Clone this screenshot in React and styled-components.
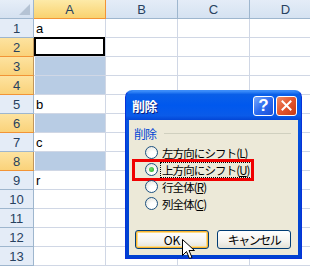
import React from "react";
import styled, { createGlobalStyle, css } from "styled-components";

const GlobalStyle = createGlobalStyle`
  html, body {
    margin: 0;
    padding: 0;
    background: #ffffff;
    overflow: hidden;
  }
  body {
    font-family: "Noto Sans CJK JP", "Liberation Sans", sans-serif;
  }
`;

const Screen = styled.div`
  position: relative;
  width: 310px;
  height: 266px;
  overflow: hidden;
`;

const Sheet = styled.div`
  display: grid;
  grid-template-columns: 34px repeat(4, 72px);
  grid-auto-rows: 19px;
  width: 322px;
`;

const Corner = styled.div`
  position: relative;
  box-sizing: border-box;
  background: linear-gradient(#e6eef8, #d5e1f0);
  border-right: 1px solid #9eb6ce;
  border-bottom: 1px solid #9eb6ce;
  &::after {
    content: "";
    position: absolute;
    right: 3px;
    bottom: 3px;
    border-left: 11px solid transparent;
    border-bottom: 11px solid #b5c3d4;
  }
`;

const ColHead = styled.div`
  box-sizing: border-box;
  display: flex;
  align-items: center;
  justify-content: center;
  font-family: "Liberation Sans", "Noto Sans", sans-serif;
  font-size: 13px;
  color: #27415f;
  background: linear-gradient(#e4ecf7, #d5e2f1);
  border-right: 1px solid #9eb6ce;
  border-bottom: 1px solid #9eb6ce;
  ${(p) =>
    p.$on &&
    css`
      background: linear-gradient(#fdeaa8, #f9d26f);
      border-right-color: #f29436;
      border-bottom-color: #f29436;
    `}
`;

const RowHead = styled.div`
  box-sizing: border-box;
  display: flex;
  align-items: center;
  justify-content: center;
  font-family: "Liberation Sans", "Noto Sans", sans-serif;
  font-size: 13px;
  color: #27415f;
  background: #e4ecf7;
  border-right: 1px solid #9eb6ce;
  border-bottom: 1px solid #9eb6ce;
  ${(p) =>
    p.$on &&
    css`
      background: linear-gradient(#fde3a0, #fad27a);
      border-right-color: #c0965c;
      border-bottom-color: #f29436;
    `}
`;

const Cell = styled.div`
  position: relative;
  box-sizing: border-box;
  display: flex;
  align-items: center;
  padding-left: 2px;
  font-family: "Liberation Sans", "Noto Sans", sans-serif;
  font-size: 13px;
  color: #000;
  background: #fff;
  border-right: 1px solid #d0d7e5;
  border-bottom: 1px solid #d0d7e5;
  ${(p) =>
    p.$sel &&
    css`
      &::before {
        content: "";
        position: absolute;
        left: 1px;
        top: 0;
        right: 0;
        bottom: 0;
        background: #b8cce4;
      }
    `}
  ${(p) =>
    p.$active &&
    css`
      &::before {
        content: "";
        position: absolute;
        left: 0;
        top: -1px;
        right: 0;
        bottom: 0;
        border: 2px solid #000;
      }
    `}
`;

const Window = styled.div`
  position: absolute;
  left: 125px;
  top: 90px;
  width: 177px;
  height: 169px;
  box-sizing: border-box;
  display: flex;
  flex-direction: column;
  padding: 0 3px 3px;
  border-radius: 7px 7px 0 0;
  background: linear-gradient(#0a5fe8, #0047d8 40%, #0041d0);
  border: 1px solid #0831d9;
  border-top-color: #3c8cf9;
`;

const TitleBar = styled.div`
  height: 29px;
  display: flex;
  align-items: center;
  background: linear-gradient(#3e8ffb 0%, #0a5fe8 12%, #0058ee 50%, #0a5be9 85%, #0346d6 100%);
  margin: 0 -3px;
  padding-left: 6px;
  padding-right: 4px;
  border-radius: 7px 7px 0 0;
`;

const Title = styled.div`
  flex: 1;
  font-size: 13px;
  letter-spacing: -0.5px;
  font-weight: bold;
  color: #fff;
  text-shadow: 1px 1px 0 #0a1e80;
`;

const CapButton = styled.div`
  box-sizing: border-box;
  width: 21px;
  height: 20px;
  margin-left: 2px;
  display: flex;
  align-items: center;
  justify-content: center;
  border: 1px solid #fff;
  border-radius: 3px;
  font-family: "Liberation Sans", sans-serif;
  font-weight: bold;
  font-size: 17px;
  color: #fff;
  background: ${(p) =>
    p.$close
      ? "linear-gradient(135deg, #f08b66, #e2552e 50%, #c63a14)"
      : "linear-gradient(135deg, #7aa8fb, #2c6bf0 50%, #1a4fd6)"};
`;

const Client = styled.div`
  flex: 1;
  background: #ece9d8;
  padding: 5px 7px 0 5px;
  display: flex;
  flex-direction: column;
`;

const GroupLabel = styled.div`
  display: flex;
  align-items: center;
  gap: 8px;
  font-size: 12px;
  letter-spacing: -1px;
  color: #0046d5;
  height: 16px;
  &::after {
    content: "";
    flex: 1;
    height: 1px;
    background: #d0d0bf;
  }
`;

const Options = styled.div`
  display: flex;
  flex-direction: column;
  padding-left: 11px;
  margin-top: 3px;
`;

const Option = styled.div`
  position: relative;
  display: flex;
  align-items: center;
  gap: 2px;
  height: 17px;
  font-size: 11.5px;
  letter-spacing: -0.9px;
  color: #000;
`;

const Radio = styled.span`
  box-sizing: border-box;
  width: 13px;
  height: 13px;
  border-radius: 50%;
  border: 1px solid #1c5180;
  background: radial-gradient(circle at 65% 70%, #ffffff 30%, #dcdcd3 100%);
  display: flex;
  align-items: center;
  justify-content: center;
  &::after {
    content: "";
    width: 5px;
    height: 5px;
    border-radius: 50%;
    background: ${(p) => (p.$checked ? "radial-gradient(circle at 40% 40%, #6ee06e, #21a121)" : "transparent")};
  }
`;

const Label = styled.span`
  padding: 0 1px;
  line-height: 14px;
  border: 1px dotted ${(p) => (p.$focus ? "#000" : "transparent")};
  u {
    text-decoration: underline;
  }
`;

const Highlight = styled.div`
  position: absolute;
  left: -13px;
  top: -2px;
  width: 122px;
  height: 22px;
  box-sizing: border-box;
  border: 3px solid #f00000;
  pointer-events: none;
`;

const Buttons = styled.div`
  display: flex;
  justify-content: space-between;
  margin-top: 18px;
  padding-left: 1px;
`;

const Button = styled.div`
  box-sizing: border-box;
  width: 74px;
  height: 19px;
  display: flex;
  align-items: center;
  justify-content: center;
  font-size: 12px;
  letter-spacing: ${(p) => (p.$default ? "0" : "-1.5px")};
  color: #000;
  border: 1px solid #003c74;
  border-radius: 3px;
  background: linear-gradient(#ffffff, #f4f3ee 60%, #e3e1d6);
  ${(p) =>
    p.$default &&
    css`
      box-shadow: inset 0 0 0 1px #f8b330, inset 0 0 0 2px #fbdc8a;
    `}
`;

const Cursor = styled.svg`
  position: absolute;
  left: 182px;
  top: 239px;
`;

const cols = ["A", "B", "C", "D"];
const values = { 1: "a", 5: "b", 7: "c", 9: "r" };
const selectedRows = [2, 3, 4, 6, 8];
const rows = Array.from({ length: 13 }, (_, i) => i + 1);

const options = [
  { text: "左方向にシフト", key: "L" },
  { text: "上方向にシフト", key: "U", checked: true },
  { text: "行全体", key: "R" },
  { text: "列全体", key: "C" },
];

export default function App() {
  return (
    <Screen>
      <GlobalStyle />
      <Sheet>
        <Corner />
        {cols.map((c) => (
          <ColHead key={c} $on={c === "A"}>
            {c}
          </ColHead>
        ))}
        {rows.map((r) => (
          <React.Fragment key={r}>
            <RowHead $on={selectedRows.includes(r)}>{r}</RowHead>
            {cols.map((c) => (
              <Cell
                key={c}
                $active={c === "A" && r === 2}
                $sel={c === "A" && selectedRows.includes(r) && r !== 2}
              >
                {c === "A" ? values[r] : ""}
              </Cell>
            ))}
          </React.Fragment>
        ))}
      </Sheet>

      <Window>
        <TitleBar>
          <Title>削除</Title>
          <CapButton>?</CapButton>
          <CapButton $close>
            <svg width="11" height="11" viewBox="0 0 11 11">
              <path d="M1.5 1.5 L9.5 9.5 M9.5 1.5 L1.5 9.5" stroke="#fff" strokeWidth="2" strokeLinecap="square" />
            </svg>
          </CapButton>
        </TitleBar>
        <Client>
          <GroupLabel>削除</GroupLabel>
          <Options>
            {options.map((o) => (
              <Option key={o.key}>
                <Radio $checked={o.checked} />
                <Label $focus={o.checked}>
                  {o.text}(<u>{o.key}</u>)
                </Label>
                {o.checked && <Highlight />}
              </Option>
            ))}
          </Options>
          <Buttons>
            <Button $default>OK</Button>
            <Button>キャンセル</Button>
          </Buttons>
        </Client>
      </Window>

      <Cursor width="13" height="21" viewBox="0 0 13 21">
        <path
          d="M0.5 0.5 L0.5 16.5 L4.5 12.5 L7.5 19.5 L10 18.5 L7 11.5 L12.5 11.5 Z"
          fill="#fff"
          stroke="#000"
          strokeWidth="1"
          strokeLinejoin="miter"
        />
      </Cursor>
    </Screen>
  );
}
